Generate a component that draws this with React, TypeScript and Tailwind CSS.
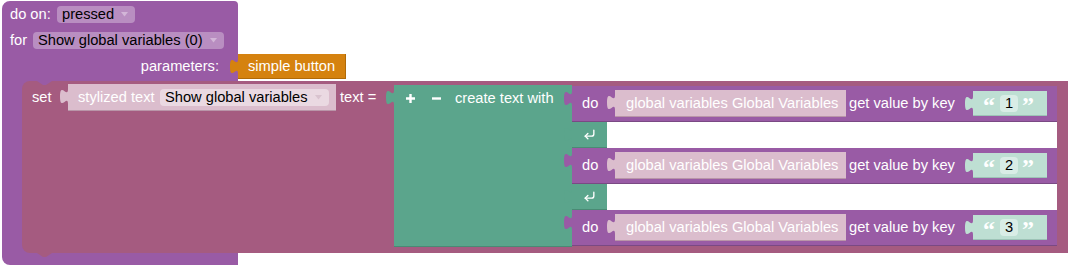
import { CornerDownLeft } from 'lucide-react';

// colours of the block kinds
const purple = 'bg-[#995ba5]';

function Tab({ fill, className }: { fill: string; className?: string }) {
  return (
    <svg width="8" height="20" viewBox="0 0 8 20" className={`shrink-0 ${className ?? ''}`}>
      <path d="M8,0 V5 c0,10 -8,-8 -8,7.5 s8,-2.5 8,7.5 V20 Z" className={fill} />
    </svg>
  );
}

function Arrow({ fill }: { fill: string }) {
  return (
    <svg width="7" height="5" viewBox="0 0 7 5" className="shrink-0">
      <path d="M0,0 H7 L3.5,4.5 Z" className={fill} />
    </svg>
  );
}

function Dropdown({ label, width, bg, arrow }: { label: string; width: string; bg: string; arrow: string }) {
  return (
    <span className={`flex h-[17px] items-center justify-between rounded-[4px] pl-[5px] pr-[7px] text-black ${width} ${bg}`}>
      <span>{label}</span>
      <Arrow fill={arrow} />
    </span>
  );
}

function Quote({ open }: { open: boolean }) {
  return (
    <span className="flex h-[17px] w-[12px] items-start justify-center font-['Liberation_Serif',serif] text-[24px] font-bold leading-[20px] text-white">
      {open ? '\u201C' : '\u201D'}
    </span>
  );
}

function GetRow({ n }: { n: string }) {
  return (
    <div className="-ml-[8px] flex items-start">
      <Tab fill="fill-[#995ba5]" />
      <div className={`flex h-[36px] w-[485px] items-center border-b border-[#7a4984] pl-[10px] ${purple}`}>
        <span className="w-[25px]">do</span>
        <div className="flex items-start">
          <Tab fill="fill-[#dbbdcd]" />
          <div className="flex h-[27px] w-[231px] items-center border-b border-[#b995a8] bg-[#dbbdcd] pl-[11px]">
            global variables Global Variables
          </div>
        </div>
        <span className="ml-[3px] w-[116px]">get value by key</span>
        <div className="flex items-start">
          <Tab fill="fill-[#bedfd3]" />
          <div className="flex h-[25px] w-[74px] items-center border-b border-[#9dc3b6] bg-[#bedfd3] pl-[10px]">
            <Quote open />
            <span className="ml-[5px] flex h-[17px] w-[18px] items-center justify-center rounded-[4px] bg-[#d9ede6] text-black">
              {n}
            </span>
            <span className="ml-[4px]">
              <Quote open={false} />
            </span>
          </div>
        </div>
      </div>
    </div>
  );
}

function NewlineRow() {
  return (
    <div className="-ml-[8px] flex items-start">
      <Tab fill="fill-[#5ba58c]" />
      <div className="flex h-[26px] w-[35px] items-center justify-center border-b border-[#4a8a74] bg-[#5ba58c]">
        <CornerDownLeft size={13} strokeWidth={2.5} className="text-white" />
      </div>
      <div className="h-[26px] w-[450px] bg-white" />
    </div>
  );
}

function SetBlock() {
  return (
    <div className="flex h-[172px] w-[1046px] shrink-0 flex-col rounded-l-[8px] bg-[#a55b80]">
      <svg width="15" height="4" viewBox="0 0 15 4" className="-mb-[4px] ml-[15px]">
        <path d="M0,0 l6,4 h3 l6,-4 Z" className="fill-[#995ba5]" />
      </svg>
      <div className="flex items-start pl-[10px]">
        <div className="mt-[3px] flex h-[27px] items-center">
          <span className="w-[28px]">set</span>
          <div className="flex items-start">
            <Tab fill="fill-[#dbbdcd]" />
            <div className="flex h-[27px] w-[268px] items-center border-b border-[#b995a8] bg-[#dbbdcd] pl-[10px]">
              <span className="w-[82px]">stylized text</span>
              <Dropdown label="Show global variables" width="w-[169px]" bg="bg-[#ead9e2]" arrow="fill-[#d9c3cf]" />
            </div>
          </div>
          <span className="ml-[4px] w-[46px]">text =</span>
        </div>
        <div className="mt-[4px] flex">
          <Tab fill="fill-[#5ba58c]" />
          <div className="flex w-[178px] items-start border-b border-[#4a8a74] bg-[#5ba58c]">
            <div className="flex h-[26px] items-center pl-[12px]">
              <svg width="9" height="9" viewBox="0 0 9 9">
                <path d="M0,4.5 H9 M4.5,0 V9" className="stroke-white" strokeWidth="2.4" />
              </svg>
              <svg width="9" height="9" viewBox="0 0 9 9" className="ml-[17px]">
                <path d="M0,4.5 H9" className="stroke-white" strokeWidth="2.4" />
              </svg>
              <span className="ml-[14px]">create text with</span>
            </div>
          </div>
          <div className="flex flex-col py-[1px]">
            <GetRow n="1" />
            <NewlineRow />
            <GetRow n="2" />
            <NewlineRow />
            <GetRow n="3" />
          </div>
        </div>
      </div>
    </div>
  );
}

export default function App() {
  return (
    <div className="h-[267px] w-[1070px] overflow-hidden bg-white pl-[2px] pt-[1px] font-['Liberation_Sans',Arial,sans-serif] text-[14.67px] leading-none text-white">
      <div className={`w-[236px] rounded-l-[8px] rounded-tr-[4px] ${purple}`}>
        <div className="flex h-[80px]">
          <div className="flex w-[236px] shrink-0 flex-col">
            <div className="flex h-[26px] items-center pl-[8px]">
              <span className="w-[47px]">do on:</span>
              <Dropdown label="pressed" width="w-[78px]" bg="bg-[#b98ec1]" arrow="fill-[#d3b6d8]" />
            </div>
            <div className="flex h-[26px] items-center pl-[8px]">
              <span className="w-[23px]">for</span>
              <Dropdown label="Show global variables (0)" width="w-[191px]" bg="bg-[#b98ec1]" arrow="fill-[#d3b6d8]" />
            </div>
            <div className="flex h-[26px] items-center justify-end pr-[19px]">parameters:</div>
          </div>
          <div className="-ml-[8px] mt-[53px] flex items-start">
            <Tab fill="fill-[#d5820f]" />
            <div className="flex h-[25px] w-[108px] items-center border-b border-r border-[#b06a08] bg-[#d5820f] pl-[10px]">
              simple button
            </div>
          </div>
        </div>
        <div className="flex pl-[20px]">
          <SetBlock />
        </div>
        <div className="h-[12px] rounded-bl-[8px]">
          <svg width="15" height="4" viewBox="0 0 15 4" className="ml-[35px] block">
            <path d="M0,0 l6,4 h3 l6,-4 Z" className="fill-[#a55b80]" />
          </svg>
        </div>
      </div>
    </div>
  );
}
